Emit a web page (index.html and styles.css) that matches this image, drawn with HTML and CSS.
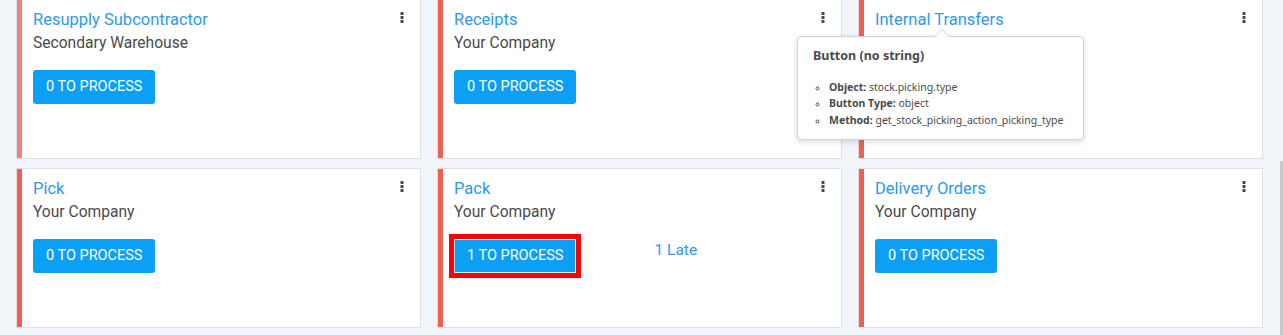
FILE: index.html
```html
<!DOCTYPE html>
<html lang="en">
<head>
<meta charset="utf-8">
<title>Inventory Overview</title>
<link rel="stylesheet" href="styles.css">
</head>
<body>
<main class="board">
  <section class="card card-faded">
    <div class="head">
      <a class="title">Resupply Subcontractor</a>
      <svg class="kebab" width="4" height="11" viewBox="0 0 4 11"><rect x="0.5" y="0" width="3" height="3" rx="0.6"/><rect x="0.5" y="4" width="3" height="3" rx="0.6"/><rect x="0.5" y="8" width="3" height="3" rx="0.6"/></svg>
    </div>
    <div class="sub">Secondary Warehouse</div>
    <div class="actions"><button class="btn">0 TO PROCESS</button></div>
  </section>
  <section class="card">
    <div class="head">
      <a class="title">Receipts</a>
      <svg class="kebab" width="4" height="11" viewBox="0 0 4 11"><rect x="0.5" y="0" width="3" height="3" rx="0.6"/><rect x="0.5" y="4" width="3" height="3" rx="0.6"/><rect x="0.5" y="8" width="3" height="3" rx="0.6"/></svg>
    </div>
    <div class="sub">Your Company</div>
    <div class="actions"><button class="btn">0 TO PROCESS</button></div>
  </section>
  <section class="card">
    <div class="head">
      <a class="title">Internal Transfers</a>
      <svg class="kebab" width="4" height="11" viewBox="0 0 4 11"><rect x="0.5" y="0" width="3" height="3" rx="0.6"/><rect x="0.5" y="4" width="3" height="3" rx="0.6"/><rect x="0.5" y="8" width="3" height="3" rx="0.6"/></svg>
    </div>
    <div class="sub">Your Company</div>
    <div class="actions"><button class="btn">0 TO PROCESS</button></div>
  </section>
  <section class="card">
    <div class="head">
      <a class="title">Pick</a>
      <svg class="kebab" width="4" height="11" viewBox="0 0 4 11"><rect x="0.5" y="0" width="3" height="3" rx="0.6"/><rect x="0.5" y="4" width="3" height="3" rx="0.6"/><rect x="0.5" y="8" width="3" height="3" rx="0.6"/></svg>
    </div>
    <div class="sub">Your Company</div>
    <div class="actions"><button class="btn">0 TO PROCESS</button></div>
  </section>
  <section class="card">
    <div class="head">
      <a class="title">Pack</a>
      <svg class="kebab" width="4" height="11" viewBox="0 0 4 11"><rect x="0.5" y="0" width="3" height="3" rx="0.6"/><rect x="0.5" y="4" width="3" height="3" rx="0.6"/><rect x="0.5" y="8" width="3" height="3" rx="0.6"/></svg>
    </div>
    <div class="sub">Your Company</div>
    <div class="actions split">
      <div><button class="btn btn-hl">1 TO PROCESS</button></div>
      <a class="late">1 Late</a>
    </div>
  </section>
  <section class="card">
    <div class="head">
      <a class="title">Delivery Orders</a>
      <svg class="kebab" width="4" height="11" viewBox="0 0 4 11"><rect x="0.5" y="0" width="3" height="3" rx="0.6"/><rect x="0.5" y="4" width="3" height="3" rx="0.6"/><rect x="0.5" y="8" width="3" height="3" rx="0.6"/></svg>
    </div>
    <div class="sub">Your Company</div>
    <div class="actions"><button class="btn">0 TO PROCESS</button></div>
  </section>
</main>

<div class="tooltip">
  <div class="tip-title">Button (no string)</div>
  <ul class="tip-list">
    <li><b>Object:</b> stock.picking.type</li>
    <li><b>Button Type:</b> object</li>
    <li><b>Method:</b> get_stock_picking_action_picking_type</li>
  </ul>
</div>

<div class="scroll-thumb"></div>
</body>
</html>
```

FILE: styles.css
```css
* { box-sizing: border-box; }

html, body {
  margin: 0;
  height: 100%;
  overflow: hidden;
}

body {
  background: #f1f5f9;
  font-family: Roboto, "Liberation Sans", sans-serif;
  color: #4c4c4c;
}

.board {
  display: grid;
  grid-template-columns: repeat(3, 405px);
  column-gap: 16px;
  row-gap: 9px;
  margin-top: -1px;
  padding-left: 16px;
}

.card {
  height: 160px;
  background: #fff;
  border: 1px solid #dde1e6;
  box-shadow: inset 5px 0 0 #f06050;
  padding: 8px 16px 0 16px;
}

.card-faded {
  box-shadow: inset 5px 0 0 #ea8280;
}

.head {
  display: flex;
  justify-content: space-between;
  align-items: flex-start;
}

.title {
  font-size: 16.5px;
  line-height: 24px;
  color: #2f98ef;
}

.kebab {
  fill: #454a50;
  margin-top: 4px;
}

.sub {
  font-size: 15.6px;
  line-height: 22px;
  color: #4a4a4a;
}

.actions {
  margin-top: 16px;
}

.split {
  display: grid;
  grid-template-columns: 1fr 1fr;
  align-items: start;
}

.btn {
  height: 34px;
  padding: 0 13px;
  border: 0;
  border-radius: 3px;
  background: #0c9ff6;
  color: #fff;
  font-family: Roboto, "Liberation Sans", sans-serif;
  font-size: 14.5px;
  line-height: 34px;
}

.btn-hl {
  border-radius: 0;
  box-shadow: inset 0 0 0 1px #d9ecfb;
  outline: 5px solid #ff0000;
  outline-offset: 0;
}

.late {
  padding-left: 15px;
  font-size: 15.5px;
  line-height: 22px;
  color: #2f98ef;
}

.tooltip {
  position: absolute;
  left: 797px;
  top: 36px;
  width: 287px;
  height: 104px;
  background: #fff;
  border: 1px solid #cfd3d8;
  border-radius: 4px;
  box-shadow: 0 2px 6px rgba(0, 0, 0, 0.15);
  padding: 9px 15px 0 15px;
  font-family: "Noto Sans", "DejaVu Sans", sans-serif;
  color: #4a4a4a;
}

.tooltip::before,
.tooltip::after {
  content: "";
  position: absolute;
  left: 136px;
  border-style: solid;
  border-color: transparent;
}

.tooltip::before {
  top: -8px;
  border-width: 0 8px 8px 8px;
  border-bottom-color: #cfd3d8;
}

.tooltip::after {
  top: -7px;
  left: 137px;
  border-width: 0 7px 7px 7px;
  border-bottom-color: #fff;
}

.tip-title {
  font-size: 12.5px;
  font-weight: 700;
  line-height: 20px;
}

.tip-list {
  list-style: circle;
  margin: 13px 0 0 0;
  padding-left: 16px;
  font-size: 10.5px;
  line-height: 16.4px;
}

.tip-list li::marker {
  font-size: 9px;
}

.tip-list b {
  font-weight: 700;
}

.scroll-thumb {
  position: fixed;
  right: 0;
  top: 161px;
  width: 3px;
  bottom: 0;
  background: #c8c8c8;
}
```
